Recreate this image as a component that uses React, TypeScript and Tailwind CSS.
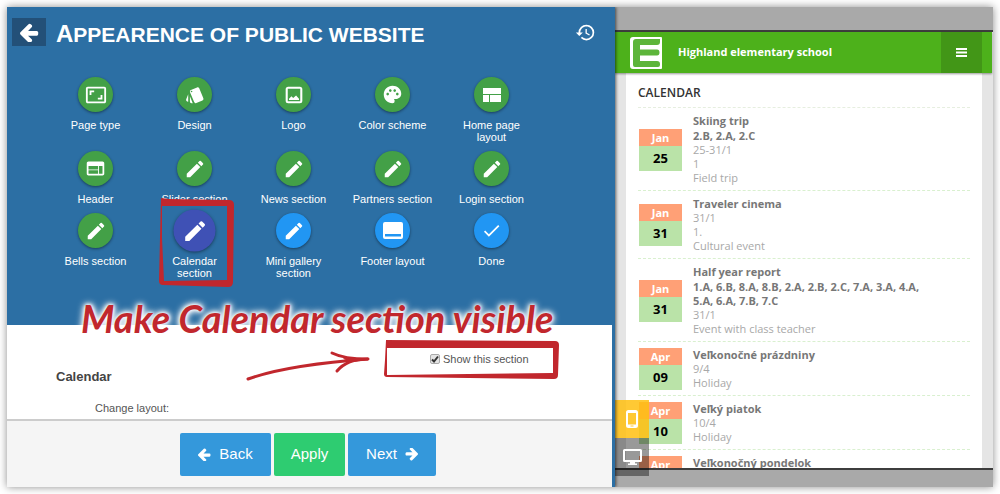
import { ReactNode } from "react";
import {
  MdAspectRatio,
  MdDone,
  MdEdit,
  MdHistory,
  MdPalette,
  MdStyle,
  MdWeb,
} from "react-icons/md";

interface IStep {
  label: string;
  icon: ReactNode;
  color: string;
  active?: boolean;
}

interface IEvent {
  month: string;
  day?: string;
  title: string;
  classes?: string;
  lines?: string[];
}

const GREEN = "bg-[#43a047]";
const BLUE = "bg-[#2196f3]";

const PictureIcon = () => (
  <svg viewBox="0 0 24 24" width="20" height="20" fill="currentColor">
    <path
      fillRule="evenodd"
      d="M19 2H5a3 3 0 0 0-3 3v14a3 3 0 0 0 3 3h14a3 3 0 0 0 3-3V5a3 3 0 0 0-3-3zM4.500 4.500v15h15v-15z"
    />
    <path d="M6 18v-1.500l3-3 2 2 3.500-3 3.500 4V18z" />
  </svg>
);

const LayoutIcon = () => (
  <svg viewBox="0 0 18 14" width="18" height="14" fill="currentColor">
    <path d="M0 0h18v6H0zM0 7h6v7H0zM7 7h11v7H7z" />
  </svg>
);

const FooterIcon = () => (
  <svg viewBox="0 0 20 17" width="20" height="17" fill="currentColor">
    <path
      fillRule="evenodd"
      d="M2 0h16q2 0 2 2v13q0 2-2 2H2q-2 0-2-2V2q0-2 2-2zM2 12v2.500h16V12z"
    />
  </svg>
);

const PhoneIcon = () => (
  <svg viewBox="0 0 12 18" width="12" height="18" fill="currentColor">
    <path
      fillRule="evenodd"
      d="M2.500 0h7A2.500 2.500 0 0 1 12 2.500v13a2.500 2.500 0 0 1-2.500 2.500h-7A2.500 2.500 0 0 1 0 15.500v-13A2.500 2.500 0 0 1 2.500 0zM2 3v11.500h8V3zm2.500 12.500v1h3v-1z"
    />
  </svg>
);

const MonitorIcon = () => (
  <svg viewBox="0 0 19 16" width="19" height="16" fill="currentColor">
    <path
      fillRule="evenodd"
      d="M1.500 0h16Q19 0 19 1.500v10q0 1.500-1.500 1.500H12v1.500h2V16H5v-1.500h2V13H1.500Q0 13 0 11.500v-10Q0 0 1.500 0zM2 2v9h15V2z"
    />
  </svg>
);

const ArrowIcon = ({ className }: { className: string }) => (
  <svg viewBox="64 128 1536 1536" className={className} fill="currentColor">
    <path d="M1536 896v128q0 53-32.500 90.500t-84.500 37.500h-704l293 294q38 36 38 90t-38 90l-75 76q-37 37-90 37-52 0-91-37l-651-652q-37-37-37-90 0-52 37-91l651-650q38-38 91-38 52 0 90 38l75 74q38 38 38 91t-38 91l-293 293h704q52 0 84.500 37.500t32.500 90.500z" />
  </svg>
);

const SchoolLogo = () => (
  <svg viewBox="0 0 32 32" width="32" height="32">
    <path
      d="M3 0h28q1 0 1 1v30q0 1-1 1H3q-3 0-3-3V3q0-3 3-3z"
      fill="#fff"
    />
    <path
      d="M6 2h24v3q0 3-3 3H10v4.500h17q2.500 0 2.500 3t-2.500 3H10V24h17q3 0 3 3v1q0 2-2 2H5q-2 0-2-2V5q0-3 3-3z"
      fill="#5db53a"
    />
  </svg>
);

const steps: IStep[] = [
  { label: "Page type", icon: <MdAspectRatio size={22} />, color: GREEN },
  { label: "Design", icon: <MdStyle size={20} />, color: GREEN },
  { label: "Logo", icon: <PictureIcon />, color: GREEN },
  { label: "Color scheme", icon: <MdPalette size={21} />, color: GREEN },
  { label: "Home page layout", icon: <LayoutIcon />, color: GREEN },
  { label: "Header", icon: <MdWeb size={21} />, color: GREEN },
  { label: "Slider section", icon: <MdEdit size={22} />, color: GREEN },
  { label: "News section", icon: <MdEdit size={22} />, color: GREEN },
  { label: "Partners section", icon: <MdEdit size={22} />, color: GREEN },
  { label: "Login section", icon: <MdEdit size={22} />, color: GREEN },
  { label: "Bells section", icon: <MdEdit size={22} />, color: GREEN },
  {
    label: "Calendar section",
    icon: <MdEdit size={22} />,
    color: "bg-[#3f51b5]",
    active: true,
  },
  { label: "Mini gallery section", icon: <MdEdit size={22} />, color: BLUE },
  { label: "Footer layout", icon: <FooterIcon />, color: BLUE },
  { label: "Done", icon: <MdDone size={21} />, color: BLUE },
];

const events: IEvent[] = [
  {
    month: "Jan",
    day: "25",
    title: "Skiing trip",
    classes: "2.B, 2.A, 2.C",
    lines: ["25-31/1", "1", "Field trip"],
  },
  {
    month: "Jan",
    day: "31",
    title: "Traveler cinema",
    lines: ["31/1", "1.", "Cultural event"],
  },
  {
    month: "Jan",
    day: "31",
    title: "Half year report",
    classes: "1.A, 6.B, 8.A, 8.B, 2.A, 2.B, 2.C, 7.A, 3.A, 4.A, 5.A, 6.A, 7.B, 7.C",
    lines: ["31/1", "Event with class teacher"],
  },
  {
    month: "Apr",
    day: "09",
    title: "Veľkonočné prázdniny",
    lines: ["9/4", "Holiday"],
  },
  {
    month: "Apr",
    day: "10",
    title: "Veľký piatok",
    lines: ["10/4", "Holiday"],
  },
  {
    month: "Apr",
    title: "Veľkonočný pondelok",
  },
];

const Step = ({ step }: { step: IStep }) => (
  <button className="relative flex flex-col items-center text-white">
    <span
      className={`flex size-[35px] items-center justify-center rounded-full shadow-[0_1px_3px_rgba(0,0,0,0.45)] ${
        step.color
      } ${step.active ? "scale-120" : ""}`}
    >
      {step.icon}
    </span>
    <span className="mt-[7px] w-20 text-[11px] leading-3">{step.label}</span>
    {step.active && (
      <svg
        viewBox="0 0 76 90"
        width="76"
        height="90"
        className="pointer-events-none absolute -top-[15px] left-[14px]"
      >
        <path
          fillRule="evenodd"
          fill="#c1272d"
          d="M2 0 10 1 70 2q5 0 5 5l-1 77q0 5-5 5L4 87q-4 0-4-4L1 40zM3 8 3 40l2 43 63-1V8z"
        />
      </svg>
    )}
  </button>
);

const Annotation = () => (
  <div className="pointer-events-none absolute top-[286px] left-[74px] font-[Lato,sans-serif] text-[38px] leading-[50px] font-bold whitespace-nowrap text-[#c1272d] italic [text-shadow:0_0_3px_#fff,0_0_5px_#fff,0_0_7px_#fff,0_0_9px_#fff]">
    Make Calendar section visible
  </div>
);

const Settings = () => (
  <section className="relative flex-1 overflow-hidden bg-white text-[#555]">
    <label className="absolute top-[28px] left-[423px] flex items-center gap-[3px] text-[11px] leading-3">
      <span className="grid size-[10px]">
        <input
          type="checkbox"
          defaultChecked
          className="peer col-start-1 row-start-1 size-[10px] appearance-none rounded-[2px] border border-[#aaa] bg-[#e4e4e4]"
        />
        <svg
          viewBox="0 0 10 10"
          className="pointer-events-none invisible col-start-1 row-start-1 peer-checked:visible"
        >
          <path d="M2 5.500 4 7.500 8 2.500" fill="none" stroke="#333" strokeWidth="2" />
        </svg>
      </span>
      Show this section
    </label>
    <svg
      viewBox="0 0 176 40"
      width="176"
      height="40"
      className="pointer-events-none absolute top-[15px] left-[377px]"
    >
      <path
        fillRule="evenodd"
        fill="#c1272d"
        d="M2 0 171 1q4 0 4 4l-1 30q0 4-4 4L3 37q-3 0-3-3L1 20zM3 8v27l166-2V8z"
      />
    </svg>
    <svg
      viewBox="0 0 126 32"
      width="126"
      height="32"
      className="pointer-events-none absolute top-[24px] left-[239px]"
      fill="none"
      stroke="#c1272d"
      strokeWidth="3"
      strokeLinecap="round"
    >
      <path d="M2 30C30 20 68 14 122 10" />
      <path d="M86 4q12 6 36 6-21 0-31 12" />
      <path d="M98 9 122 10 102 13z" fill="#c1272d" strokeWidth="1" />
    </svg>
    <h2 className="mt-[43px] ml-[49px] text-[13px] leading-[18px] font-bold text-[#444]">
      Calendar
    </h2>
    <p className="mt-[15px] ml-[88px] text-[11px] leading-[14px]">
      Change layout:
    </p>
  </section>
);

const Editor = () => (
  <main className="relative z-10 flex min-w-0 flex-1 flex-col bg-[#2c6fa4] pr-[3px] shadow-[1px_0_3px_rgba(0,0,0,0.6)]">
    <header className="flex h-[318px] flex-none flex-col">
      <div className="mt-[11px] flex items-start pr-4 pl-[5px]">
        <button
          aria-label="Back"
          className="flex h-7 w-[34px] items-center justify-center bg-[#235078] text-white"
        >
          <ArrowIcon className="size-[19px]" />
        </button>
        <h1 className="ml-[10px] flex-1 pt-0.5 text-[21px] leading-7 font-bold text-white uppercase first-letter:text-[24px]">
          Appearence of public website
        </h1>
        <button aria-label="History" className="pt-1 text-white">
          <MdHistory size={21} />
        </button>
      </div>
      <div className="mt-7 ml-[39px] grid w-[495px] grid-cols-5 grid-rows-[74px_62px_66px] items-start">
        {steps.map((step) => (
          <Step key={step.label} step={step} />
        ))}
      </div>
    </header>
    <Settings />
    <footer className="flex h-[68px] flex-none justify-center gap-[3px] border-t-2 border-[#ccc] bg-[#f5f5f5] pt-3 pr-[3px] text-[15px] text-white">
      <button className="flex h-[43px] w-[91px] items-center justify-center gap-2 rounded-[2px] bg-[#3498db]">
        <ArrowIcon className="size-[13px]" />
        Back
      </button>
      <button className="h-[43px] w-[71px] rounded-[2px] bg-[#2ecc71]">
        Apply
      </button>
      <button className="flex h-[43px] w-[88px] items-center justify-center gap-2 rounded-[2px] bg-[#3498db]">
        Next
        <ArrowIcon className="size-[13px] rotate-180" />
      </button>
    </footer>
    <Annotation />
  </main>
);

const EventRow = ({ event }: { event: IEvent }) => (
  <li className="flex items-center gap-[11px] border-b border-dashed border-[#d9f0cf] pt-[6px] pb-[5px] pl-[1px]">
    <div className="w-[43px] flex-none text-center font-bold">
      <div className="bg-[#ffa076] text-[11px] leading-[17px] text-white">
        {event.month}
      </div>
      {event.day && (
        <div className="bg-[#bae3a8] text-[13px] leading-[25px] text-black">
          {event.day}
        </div>
      )}
    </div>
    <div className="w-[240px] self-start text-[11px] leading-[14px] text-[#a8a8a8]">
      <h3 className="font-bold text-[#777]">{event.title}</h3>
      {event.classes && (
        <p className="mt-px font-bold text-[#777]">{event.classes}</p>
      )}
      {event.lines?.map((line) => (
        <p key={line}>{line}</p>
      ))}
    </div>
  </li>
);

const Preview = () => (
  <aside className="relative flex w-[378px] flex-none flex-col bg-[#a9a9a9] pt-[23px] pb-[17px] font-['Open_Sans',sans-serif]">
    <div className="flex min-h-0 flex-1 flex-col border-y-2 border-[#3d3d3d] bg-[#e5e5e5]">
      <div className="z-[1] mr-[1px] flex h-[41px] flex-none items-center bg-[#4db11b] pr-[10px] pl-[15px] shadow-[0_1px_2px_rgba(0,0,0,0.4)]">
        <SchoolLogo />
        <span className="ml-4 flex-1 text-[11px] font-bold text-white">
          Highland elementary school
        </span>
        <button
          aria-label="Menu"
          className="flex h-full w-[41px] items-center justify-center bg-[#429617] text-white"
        >
          <svg viewBox="0 0 11 9" width="11" height="9" fill="currentColor">
            <path d="M0 0h11v2H0zM0 3.500h11v2H0zM0 7h11v2H0z" />
          </svg>
        </button>
      </div>
      <div className="mr-[11px] ml-[11px] min-h-0 flex-1 overflow-hidden bg-white px-3 pt-[11px]">
        <h2 className="border-b border-dashed border-[#e6eedf] pb-[6px] text-[12px] leading-[17px] font-semibold text-[#333]">
          CALENDAR
        </h2>
        <ul>
          {events.map((event) => (
            <EventRow key={event.title} event={event} />
          ))}
        </ul>
      </div>
    </div>
    <div className="absolute bottom-[11px] left-0 z-[2] flex w-[34px] flex-col text-white">
      <button
        aria-label="Phone preview"
        className="flex h-[38px] items-center justify-center bg-[#ffc010]/85"
      >
        <PhoneIcon />
      </button>
      <button
        aria-label="Desktop preview"
        className="flex h-[38px] items-center justify-center bg-black/40"
      >
        <MonitorIcon />
      </button>
    </div>
  </aside>
);

export default function App() {
  return (
    <div className="flex h-screen bg-white p-[7px] font-['Liberation_Sans',sans-serif]">
      <div className="flex min-w-0 flex-1 overflow-hidden shadow-[0_0_8px_rgba(0,0,0,0.45)]">
        <Editor />
        <Preview />
      </div>
    </div>
  );
}
